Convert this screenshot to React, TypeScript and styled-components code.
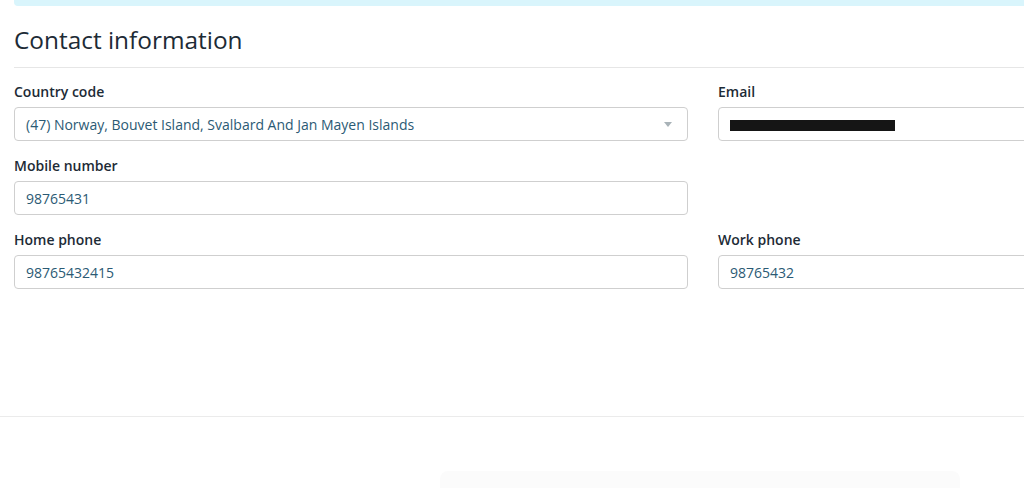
import React from "react";
import styled, { createGlobalStyle } from "styled-components";

const GlobalStyle = createGlobalStyle`
  html, body {
    margin: 0;
    padding: 0;
    background: #ffffff;
    overflow: hidden;
  }
  body {
    font-family: "Open Sans", "Noto Sans", Arial, sans-serif;
    color: #1d2b36;
  }
`;

const Page = styled.div`
  width: 1024px;
  height: 488px;
  overflow: hidden;
  display: flex;
  flex-direction: column;
`;

const Banner = styled.div`
  margin-left: 14px;
  height: 6px;
  background: #d9f5fc;
  border-bottom-left-radius: 4px;
`;

const Section = styled.section`
  padding-left: 14px;
  width: 1391px;
`;

const Heading = styled.h2`
  margin: 18px 0 0;
  font-size: 24.4px;
  line-height: 32px;
  font-weight: 400;
  color: #1d2b36;
  padding-bottom: 11px;
  border-bottom: 1px solid #e6e6e6;
`;

const Grid = styled.div`
  display: grid;
  grid-template-columns: 674px 674px;
  column-gap: 30px;
  row-gap: 16px;
  margin-top: 15px;
`;

const Field = styled.div`
  display: flex;
  flex-direction: column;
  gap: 6px;
`;

const Label = styled.label`
  font-size: 14px;
  line-height: 18px;
  font-weight: 600;
  color: #1d2b36;
`;

const Box = styled.div`
  box-sizing: border-box;
  height: 34px;
  border: 1px solid #cfcfcf;
  border-radius: 4px;
  padding: 0 11px;
  display: flex;
  align-items: center;
  justify-content: space-between;
  font-size: 14px;
  color: #2b5a74;
  background: #fff;
`;

const Caret = styled.span`
  width: 0;
  height: 0;
  border-left: 4px solid transparent;
  border-right: 4px solid transparent;
  border-top: 5px solid #a9b3b8;
  margin-right: 4px;
`;

const Redacted = styled.span`
  display: inline-block;
  width: 165px;
  height: 11px;
  background: #151515;
  margin-top: 2px;
`;

const Empty = styled.div``;

const Footer = styled.footer`
  margin-top: 127px;
  border-top: 1px solid #ebebeb;
  flex: 1;
  display: flex;
  justify-content: flex-end;
  align-items: flex-end;
  padding-right: 64px;
`;

const GhostButton = styled.div`
  width: 520px;
  height: 17px;
  background: #fbfbfb;
  border-radius: 8px 8px 0 0;
`;

export default function App() {
  return (
    <>
      <GlobalStyle />
      <Page>
        <Banner />
        <Section>
          <Heading>Contact information</Heading>
          <Grid>
            <Field>
              <Label>Country code</Label>
              <Box>
                <span>(47) Norway, Bouvet Island, Svalbard And Jan Mayen Islands</span>
                <Caret />
              </Box>
            </Field>
            <Field>
              <Label>Email</Label>
              <Box>
                <Redacted />
              </Box>
            </Field>
            <Field>
              <Label>Mobile number</Label>
              <Box>98765431</Box>
            </Field>
            <Empty />
            <Field>
              <Label>Home phone</Label>
              <Box>98765432415</Box>
            </Field>
            <Field>
              <Label>Work phone</Label>
              <Box>98765432</Box>
            </Field>
          </Grid>
        </Section>
        <Footer>
          <GhostButton />
        </Footer>
      </Page>
    </>
  );
}
